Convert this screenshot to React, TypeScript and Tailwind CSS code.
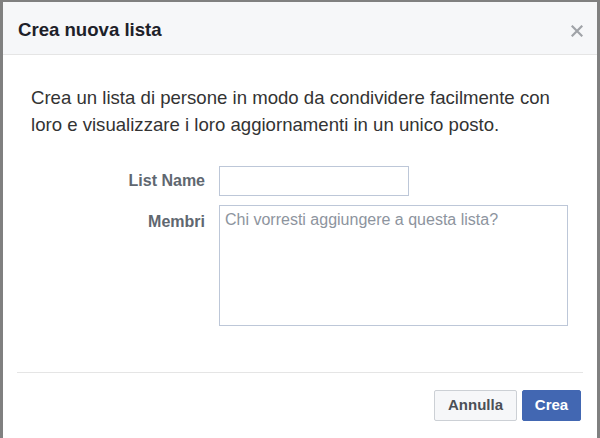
export default function App() {
  return (
    <div className="h-[438px] w-[600px] bg-[#808080] pl-[3px] pt-[2px] pr-[3px] font-['Liberation_Sans',Arial,sans-serif]">
      <div className="flex h-[436px] flex-col bg-white">
        <div className="flex h-[53px] items-center justify-between border-b border-[#e5e5e5] bg-[#f6f7f9] pl-[15px] pr-[14px]">
          <h1 className="mt-[3px] text-[18.6px] font-bold text-[#1d2129]">Crea nuova lista</h1>
          <svg width="12" height="12" viewBox="0 0 12 12" className="mt-[6px]">
            <path d="M1.5 1.5 L10.5 10.5 M10.5 1.5 L1.5 10.5" stroke="#a0a3a8" strokeWidth="2.2" strokeLinecap="square" />
          </svg>
        </div>
        <p className="w-[560px] pl-[28px] pt-[29px] text-[18.6px] leading-[27px] text-[#333]">
          Crea un lista di persone in modo da condividere facilmente con loro e visualizzare i loro aggiornamenti in un unico posto.
        </p>
        <div className="mt-[28px] grid grid-cols-[202px_1fr] gap-x-[14px] gap-y-[9px] pr-[29px]">
          <label className="self-center text-right text-[16px] font-bold text-[#606770]">List Name</label>
          <input className="h-[30px] w-[190px] border border-[#bdc7d8] outline-none" />
          <label className="pt-[5px] text-right text-[16px] font-bold text-[#606770]">Membri</label>
          <textarea
            placeholder="Chi vorresti aggiungere a questa lista?"
            className="h-[121px] w-full resize-none border border-[#bdc7d8] px-[5px] py-[2px] text-[16px] text-[#333] outline-none placeholder:text-[#8d949e]"
          />
        </div>
        <div className="mx-[14px] mt-[46px] border-t border-[#e5e5e5]" />
        <div className="flex justify-end gap-[5px] pr-[16px] pt-[17px]">
          <button className="h-[31px] w-[83px] rounded-[2px] border border-[#ccd0d5] bg-[#f6f7f9] text-[15px] font-bold text-[#4b4f56]">Annulla</button>
          <button className="h-[31px] w-[59px] rounded-[2px] border border-[#4267b2] bg-[#4267b2] text-[15px] font-bold text-white">Crea</button>
        </div>
      </div>
    </div>
  );
}
